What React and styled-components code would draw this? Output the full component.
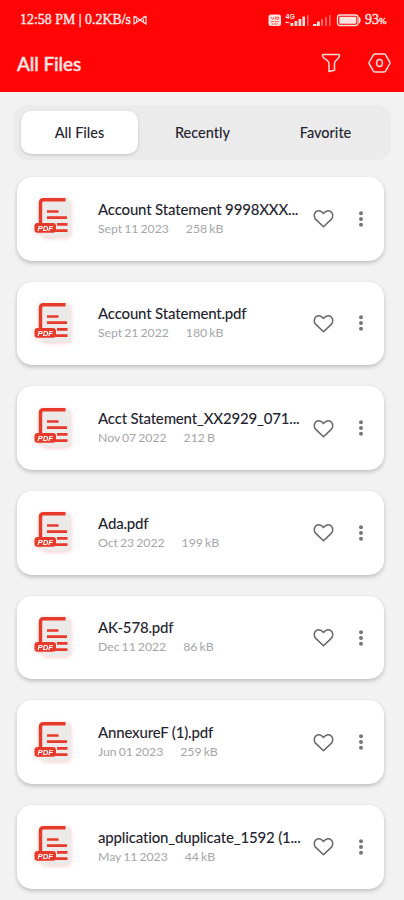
import styled, { createGlobalStyle } from "styled-components";
import { useState } from "react";

const files = [
  { name: "Account Statement 9998XXX...", date: "Sept 11 2023", size: "258 kB" },
  { name: "Account Statement.pdf", date: "Sept 21 2022", size: "180 kB" },
  { name: "Acct Statement_XX2929_071...", date: "Nov 07 2022", size: "212 B" },
  { name: "Ada.pdf", date: "Oct 23 2022", size: "199 kB" },
  { name: "AK-578.pdf", date: "Dec 11 2022", size: "86 kB" },
  { name: "AnnexureF (1).pdf", date: "Jun 01 2023", size: "259 kB" },
  { name: "application_duplicate_1592 (1...", date: "May 11 2023", size: "44 kB" },
];

const tabs = ["All Files", "Recently", "Favorite"];

const StatusIcons = () => (
  <svg width="95" height="16" viewBox="0 0 95 16" fill="#ffe3e0">
    <rect x="0.5" y="2.5" width="12.5" height="11.5" rx="2.5" />
    <g fill="none" stroke="#ff5a52" strokeWidth="1">
      <path d="M3 5l1.6 2.6L6.2 5M7.5 5.2h3v2h-3zM3 9.5h3M7 9.5h3.5M3.5 12h6.5" />
    </g>
    <text x="17.5" y="7" fontSize="7" fontWeight="700" fontFamily="Liberation Sans, sans-serif">
      4G
    </text>
    <path d="M17 11l2-2v1.3h2.5v1zM22.5 11h2.8v3h-2.8zM26.5 9h2.8v5h-2.8zM30.5 7h2.8v7h-2.8zM34.5 4.5h2.5v9.5h-2.5z" />
    <path d="M39 3h1.6v11H39z" opacity="0.45" />
    <path d="M45 12h3.5v2H45zM49 9.5h2.8V14H49z" />
    <path d="M53 7h2v7h-2zM57 5h1.8v9H57zM61 3h1.6v11H61z" opacity="0.45" />
    <rect x="69.5" y="3" width="20.5" height="10.5" rx="2.5" fill="none" stroke="#ffe3e0" strokeWidth="1.3" />
    <rect x="71.3" y="4.8" width="17" height="7" rx="1" />
    <path d="M91 4.5q3.5 3.7 0 7.5z" />
  </svg>
);

const MailIcon = () => (
  <svg width="14" height="10" viewBox="0 0 14 10" fill="none" stroke="#ffe3e0" strokeWidth="1.2">
    <path d="M1 1v8l6-4-6-4M13 1v8L7 5l6-4M3.6 1.5v6.5M10.4 1.5v6.5" />
  </svg>
);

const FilterIcon = () => (
  <svg width="20" height="20" viewBox="0 0 20 20" fill="none" stroke="#ffdcda" strokeWidth="1.5" strokeLinejoin="round">
    <path d="M2.5 1.5h15c.8 0 1.1.6 1 1.3-.1 2.3-1.8 3.4-3.5 4.7-1.2.9-1.5 1.7-1.5 3v6.7L8 18.5v-7.7c0-1.6-.5-2.3-1.7-3.3C4.3 6 1.6 5 1.5 2.8 1.4 2 1.7 1.5 2.5 1.5z" />
  </svg>
);

const SettingsIcon = () => (
  <svg width="23" height="20" viewBox="0 0 23 20" fill="none" stroke="#ffdcda" strokeWidth="1.5" strokeLinejoin="round">
    <path d="M7 1h9c.7 0 1.2.3 1.6.9l4.1 7.1c.4.7.4 1.3 0 2l-4.1 7.1c-.4.6-.9.9-1.6.9H7c-.7 0-1.2-.3-1.6-.9L1.3 11c-.4-.7-.4-1.3 0-2l4.1-7.1C5.8 1.3 6.3 1 7 1z" />
    <ellipse cx="11.5" cy="10" rx="2.9" ry="3.5" />
  </svg>
);

const PdfIcon = () => (
  <svg width="38" height="44" viewBox="0 0 38 44">
    <path d="M8 4h24q5 0 5 5v28q0 5-5 5H12q-4 0-4-4z" fill="#ece9e9" />
    <g fill="none" stroke="#e83a2a" strokeWidth="3.4">
      <path d="M31.5 4.7H9.5Q6.5 4.7 6.5 7.7V30" />
      <path d="M13 16.5h11.5M13 22.7h20M23 29.3h10.5M16 35.6h17.5" strokeWidth="2.7" />
    </g>
    <rect x="0.5" y="28" width="21.5" height="9.7" rx="3" fill="#e83a2a" />
    <text
      x="3.5"
      y="35.6"
      fill="#fff"
      fontSize="7.8"
      fontWeight="700"
      fontStyle="italic"
      textLength="15.5"
      lengthAdjust="spacingAndGlyphs"
      fontFamily="Liberation Sans, sans-serif"
    >
      PDF
    </text>
  </svg>
);

const HeartIcon = ({ filled }) => (
  <svg width="21" height="19" viewBox="0 0 21 19" fill={filled ? "#ff0505" : "none"} stroke="#66666b" strokeWidth="1.5" strokeLinejoin="round">
    <path d="M10.5 17.8L2.8 10.4C.5 8 .9 4.5 2.9 2.9 5.4 1 8.5 1.8 10.5 4.5c2-2.7 5.1-3.5 7.6-1.6 2 1.6 2.4 5.1.1 7.5z" />
  </svg>
);

const DotsIcon = () => (
  <svg width="6" height="18" viewBox="0 0 6 18" fill="#77777b">
    <circle cx="3" cy="3.2" r="2" />
    <circle cx="3" cy="9" r="2" />
    <circle cx="3" cy="14.8" r="2" />
  </svg>
);

const App = () => {
  const [active, setActive] = useState("All Files");
  const [liked, setLiked] = useState([]);

  const handleLike = (name) => {
    if (liked.includes(name)) {
      setLiked(liked.filter((item) => item !== name));
    } else {
      setLiked([...liked, name]);
    }
  };

  return (
    <Screen>
      <GlobalStyle />
      <Header>
        <StatusBar>
          <Clock>12:58 PM | 0.2KB/s</Clock>
          <MailIcon />
          <StatusRight>
            <StatusIcons />
            <Battery>
              93<small>%</small>
            </Battery>
          </StatusRight>
        </StatusBar>
        <TitleBar>
          <h1>All Files</h1>
          <IconButton aria-label="Filter">
            <FilterIcon />
          </IconButton>
          <IconButton aria-label="Settings">
            <SettingsIcon />
          </IconButton>
        </TitleBar>
      </Header>
      <Tabs>
        {tabs.map((tab) => (
          <Tab key={tab} $active={tab === active} onClick={() => setActive(tab)}>
            {tab}
          </Tab>
        ))}
      </Tabs>
      <FileList>
        {files.map(({ name, date, size }) => (
          <FileCard key={name}>
            <Thumb>
              <PdfIcon />
            </Thumb>
            <FileInfo>
              <FileName>{name}</FileName>
              <Meta>
                <span>{date}</span>
                <span>{size}</span>
              </Meta>
            </FileInfo>
            <IconButton aria-label="Favorite" onClick={() => handleLike(name)}>
              <HeartIcon filled={liked.includes(name)} />
            </IconButton>
            <MoreButton aria-label="More">
              <DotsIcon />
            </MoreButton>
          </FileCard>
        ))}
      </FileList>
    </Screen>
  );
};

const GlobalStyle = createGlobalStyle`
  * {
    box-sizing: border-box;
  }
  body {
    margin: 0;
    background-color: #f2f2f2;
  }
`;

const Screen = styled.div`
  width: 404px;
  height: 900px;
  overflow: hidden;
  background-color: #f2f2f2;
  font-family: Lato, sans-serif;
  color: #24242f;
`;

const Header = styled.header`
  height: 92px;
  background-color: #ff0505;
  color: #ffe8e6;
`;

const StatusBar = styled.div`
  display: flex;
  align-items: center;
  height: 40px;
  padding: 0 17px 0 20px;
  font-family: "Liberation Serif", serif;
  -webkit-text-stroke: 0.4px;
`;

const Clock = styled.span`
  width: 111px;
  font-size: 13.8px;
  letter-spacing: 0.05px;
  white-space: nowrap;
  margin-right: 2px;
`;

const StatusRight = styled.div`
  display: flex;
  align-items: center;
  gap: 2px;
  margin-left: auto;
`;

const Battery = styled.span`
  width: 22px;
  font-size: 14px;
  white-space: nowrap;
  small {
    font-size: 9px;
  }
`;

const TitleBar = styled.div`
  display: flex;
  align-items: center;
  height: 46px;
  padding: 0 13px 0 17px;
  h1 {
    flex: 1;
    margin: 0;
    font-size: 19px;
    font-weight: 500;
    letter-spacing: -0.1px;
    -webkit-text-stroke: 0.4px;
  }
  button + button {
    margin-left: 27px;
  }
`;

const IconButton = styled.button`
  display: flex;
  flex-shrink: 0;
  padding: 0;
  border: none;
  background: none;
`;

const Tabs = styled.nav`
  display: flex;
  align-items: center;
  gap: 6px;
  width: 377px;
  height: 55px;
  margin: 13px 0 17px 14px;
  padding: 0 7px;
  border-radius: 13px;
  background-color: #ebebec;
`;

const Tab = styled.button`
  flex: 1;
  height: 43px;
  border: none;
  border-radius: 10px;
  padding: 0;
  font: 500 14.5px Lato, sans-serif;
  color: #24242f;
  background-color: ${(props) => (props.$active ? "#fff" : "transparent")};
  box-shadow: ${(props) => (props.$active ? "0 1px 3px #0000002e" : "none")};
`;

const FileList = styled.main`
  display: flex;
  flex-direction: column;
  gap: 21.2px;
  padding: 0 20px 0 17px;
`;

const FileCard = styled.article`
  display: flex;
  flex-shrink: 0;
  align-items: center;
  height: 83.5px;
  padding: 0 20px 0 17px;
  border-radius: 15px;
  background-color: #fff;
  box-shadow: 0 2px 4px #00000038;
`;

const Thumb = styled.div`
  width: 38px;
  height: 44px;
  margin-top: -3px;
  svg {
    display: block;
    overflow: visible;
    filter: drop-shadow(0 1px 2px #ef9a9480);
  }
`;

const FileInfo = styled.div`
  width: 215px;
  margin: 0.6px 0 0 26px;
`;

const FileName = styled.div`
  font-size: 15px;
  font-weight: 500;
  line-height: 19px;
  letter-spacing: -0.18px;
  white-space: nowrap;
`;

const Meta = styled.div`
  display: flex;
  gap: 17px;
  font-size: 12.3px;
  line-height: 20px;
  letter-spacing: -0.05px;
  word-spacing: -1px;
  color: #a6a6a9;
  white-space: nowrap;
`;

const MoreButton = styled(IconButton)`
  margin-left: auto;
`;

export default App;
